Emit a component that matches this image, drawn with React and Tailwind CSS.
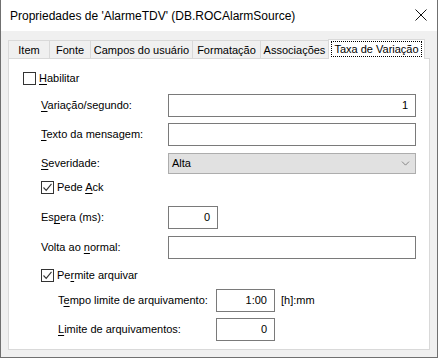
import { ChevronDown } from "lucide-react"

const font = { fontFamily: '"Liberation Sans", Arial, sans-serif' }

function U({ children }) {
  return <span className="underline underline-offset-2">{children}</span>
}

function Check({ checked }) {
  return (
    <div className="w-[13px] h-[13px] border border-[#333] bg-white flex items-center justify-center shrink-0">
      {checked && (
        <svg width="11" height="11" viewBox="0 0 11 11">
          <path d="M1.5 5.5 L4.2 8.3 L9.5 1.8" fill="none" stroke="#333" strokeWidth="1.1" />
        </svg>
      )}
    </div>
  )
}

function Field({ className, value }) {
  return (
    <div className={"h-[23px] border border-[#7a7a7a] bg-white flex items-center justify-end pr-[7px] " + className}>
      {value}
    </div>
  )
}

const tabs = [
  { label: "Item", w: "w-[42px]" },
  { label: "Fonte", w: "w-[42px]" },
  { label: "Campos do usuário", w: "w-[103px]" },
  { label: "Formatação", w: "w-[69px]" },
  { label: "Associações", w: "w-[69px]" },
]

export default function App() {
  return (
    <div
      className="w-[438px] h-[358px] bg-[#f0f0f0] border-x border-b border-[#707070] flex flex-col text-[11px] text-black"
      style={font}
    >
      {/* title bar */}
      <div className="h-[31px] bg-white flex items-center justify-between pl-[9px] pr-[10px] shrink-0">
        <span className="text-[12px]">Propriedades de 'AlarmeTDV' (DB.ROCAlarmSource)</span>
        <svg width="12" height="12" viewBox="0 0 12 12" className="mb-[2px]">
          <path d="M0.5 0.5 L11.5 11.5 M11.5 0.5 L0.5 11.5" stroke="#111" strokeWidth="1" />
        </svg>
      </div>

      {/* tabs */}
      <div className="flex items-end mt-[8px] ml-[7px] h-[19px] shrink-0 relative z-10">
        {tabs.map((t) => (
          <div
            key={t.label}
            className={"h-[18px] border border-b-0 border-[#d9d9d9] -mr-px flex items-center justify-center pt-[1px] " + t.w}
          >
            {t.label}
          </div>
        ))}
        <div className="w-[97px] h-[20px] -mb-px bg-white border border-b-0 border-[#d9d9d9] flex items-start justify-center pt-[1px]">
          <span className="border border-dotted border-black px-[2px] leading-[14px] h-[16px]">Taxa de Variação</span>
        </div>
      </div>

      {/* panel */}
      <div className="mx-[7px] h-[292px] bg-white border border-[#d9d9d9] flex flex-col pl-[14px] pr-[13px] shrink-0">
        <div className="flex items-center gap-[3px] h-[13px] mt-[13px]">
          <Check />
          <span><U>H</U>abilitar</span>
        </div>

        <div className="flex items-center h-[23px] mt-[9px] pl-[18px]">
          <span className="w-[127px]"><U>V</U>ariação/segundo:</span>
          <Field className="flex-1" value="1" />
        </div>

        <div className="flex items-center h-[23px] mt-[6px] pl-[18px]">
          <span className="w-[127px]"><U>T</U>exto da mensagem:</span>
          <Field className="flex-1" value="" />
        </div>

        <div className="flex items-center h-[21px] mt-[7px] pl-[18px]">
          <span className="w-[127px]"><U>S</U>everidade:</span>
          <div className="flex-1 h-[21px] bg-[#e1e1e1] border border-[#adadad] flex items-center justify-between pl-[3px] pr-[3px]">
            <span>Alta</span>
            <ChevronDown size={13} strokeWidth={1.2} color="#555" />
          </div>
        </div>

        <div className="flex items-center gap-[3px] h-[13px] mt-[7px] pl-[18px]">
          <Check checked />
          <span>Pede <U>A</U>ck</span>
        </div>

        <div className="flex items-center h-[23px] mt-[12px] pl-[18px]">
          <span className="w-[127px]">Es<U>p</U>era (ms):</span>
          <Field className="w-[50px]" value="0" />
        </div>

        <div className="flex items-center h-[23px] mt-[7px] pl-[18px]">
          <span className="w-[127px]">Volta ao <U>n</U>ormal:</span>
          <Field className="flex-1" value="" />
        </div>

        <div className="flex items-center gap-[3px] h-[13px] mt-[10px] pl-[18px]">
          <Check checked />
          <span>Pe<U>r</U>mite arquivar</span>
        </div>

        <div className="flex items-center h-[23px] mt-[7px] pl-[35px]">
          <span className="w-[158px]">T<U>e</U>mpo limite de arquivamento:</span>
          <Field className="w-[59px]" value="1:00" />
          <span className="ml-[6px]">[h]:mm</span>
        </div>

        <div className="flex items-center h-[23px] mt-[6px] pl-[35px]">
          <span className="w-[158px]"><U>L</U>imite de arquivamentos:</span>
          <Field className="w-[59px]" value="0" />
        </div>
      </div>
    </div>
  )
}
